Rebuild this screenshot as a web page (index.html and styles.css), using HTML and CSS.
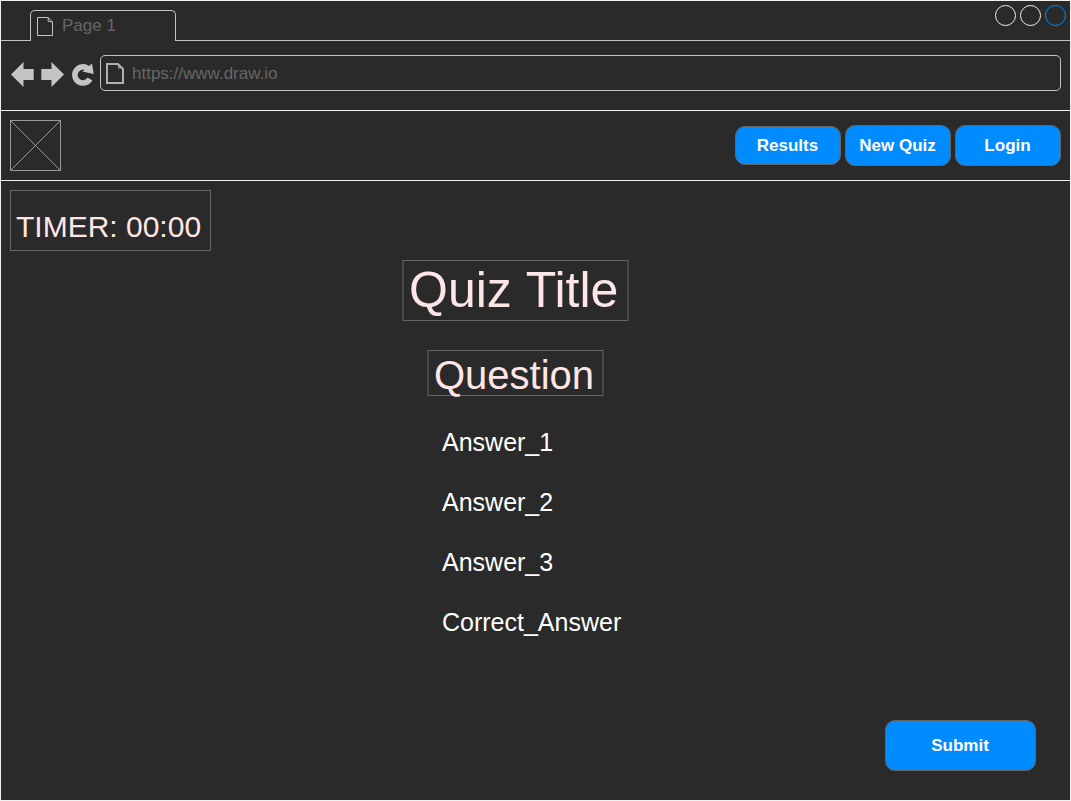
FILE: index.html
```html
<!DOCTYPE html>
<html lang="en">
<head>
<meta charset="utf-8">
<title>Quiz</title>
<link rel="stylesheet" href="styles.css">
</head>
<body>
<div class="window">
  <div class="tab-strip">
    <div class="tab">
      <svg class="tab-icon" width="16" height="19" viewBox="0 0 16 19"><path d="M.5.5H11.2L15.5 5V18.5H.5ZM11.2.5V4.2L15.5 5"/></svg>
      <span>Page 1</span>
    </div>
    <div class="controls">
      <span class="control"></span>
      <span class="control"></span>
      <span class="control control-active"></span>
    </div>
  </div>
  <div class="toolbar">
    <svg class="nav-icons" width="85" height="28" viewBox="10 61 85 28">
      <path class="solid" d="M11 74.5L23.5 62V69H33.7V80H23.5V87Z"/>
      <path class="solid" d="M64 74.5L51.5 62V69H41.3V80H51.5V87Z"/>
      <path class="reload" d="M90 79A8.1 8.1 0 1 1 87.8 68.4"/>
      <path class="solid" d="M92 63.5L93.7 74L82.3 71.6Z"/>
    </svg>
    <div class="address">
      <svg class="page-icon" width="18" height="21" viewBox="0 0 18 21"><path d="M1 1H12L17 6V20H1Z"/><path class="fold" d="M12.5 1V5H17"/></svg>
      <span>https://www.draw.io</span>
    </div>
  </div>
  <header class="site-header">
    <svg class="logo" width="51" height="51" viewBox="0 0 51 51"><path d="M.5.5H50.5V50.5H.5Z"/><path d="M.5.5L50.5 50.5"/><path d="M50.5.5L.5 50.5"/></svg>
    <nav class="actions">
      <button class="button button-short">Results</button>
      <button class="button">New Quiz</button>
      <button class="button">Login</button>
    </nav>
  </header>
  <main class="content">
    <div class="timer">TIMER: 00:00</div>
    <div class="quiz">
      <h1 class="title">Quiz Title</h1>
      <h2 class="question">Question</h2>
      <ul class="answers">
        <li>Answer_1</li>
        <li>Answer_2</li>
        <li>Answer_3</li>
        <li>Correct_Answer</li>
      </ul>
    </div>
    <button class="button submit">Submit</button>
  </main>
</div>
</body>
</html>
```
FILE: styles.css
```css
* { box-sizing: border-box; }
body {
  margin: 0;
  background: #2a2a2a;
  font-family: "Liberation Sans", Arial, sans-serif;
}
.window {
  width: 1071px;
  height: 801px;
  border: 1px solid #f0f0f0;
  background: #2a2a2a;
  display: flex;
  flex-direction: column;
  overflow: hidden;
}
svg { display: block; flex: none; fill: none; }
.tab-strip {
  height: 40px;
  flex: none;
  display: flex;
  justify-content: space-between;
  border-bottom: 1px solid #c4c4c4;
}
.tab {
  width: 146px;
  height: 31px;
  margin: 9px 0 0 29px;
  padding-left: 6px;
  border: 1px solid #c4c4c4;
  border-bottom: 0;
  border-radius: 5px 5px 0 0;
  background: #2a2a2a;
  display: flex;
  gap: 9px;
  color: #666;
  font-size: 17px;
  line-height: 30px;
}
.tab-icon { margin-top: 6px; stroke: #c4c4c4; }
.controls { display: flex; gap: 4px; padding: 4px 4px 0 0; }
.control {
  width: 21px;
  height: 21px;
  border: 1px solid #f0f0f0;
  border-radius: 50%;
}
.control-active { border-color: #008cff; }
.toolbar {
  height: 70px;
  flex: none;
  display: flex;
  padding: 14px 9px 0;
  gap: 5px;
  border-bottom: 1px solid #f0f0f0;
}
.nav-icons { margin-top: 6px; }
.solid { fill: #c4c4c4; }
.reload { stroke: #c4c4c4; stroke-width: 5.6; }
.address {
  flex: 1;
  height: 36px;
  padding-left: 5px;
  border: 1px solid #c4c4c4;
  border-radius: 5px;
  display: flex;
  gap: 8px;
  color: #666;
  font-size: 17px;
  line-height: 35px;
}
.page-icon { margin-top: 7px; stroke: #b0b0b0; stroke-width: 2; }
.fold { stroke-width: 1; }
.site-header {
  height: 70px;
  flex: none;
  display: flex;
  justify-content: space-between;
  padding: 9px 9px 0;
  border-bottom: 1px solid #f0f0f0;
}
.logo { stroke: #999; }
.actions { display: flex; align-items: center; gap: 4px; height: 51px; }
.button {
  width: 106px;
  height: 41px;
  padding: 0 1px 0 0;
  border: 1px solid #666;
  border-radius: 10px;
  background: #008cff;
  color: #fff;
  font: bold 17px "Liberation Sans", Arial, sans-serif;
}
.button-short { height: 39px; }
.content {
  flex: 1;
  display: flex;
  flex-direction: column;
  padding: 9px 34px 0 9px;
}
.timer {
  width: 201px;
  height: 61px;
  padding: 18px 0 0 5px;
  border: 1px solid #666;
  color: #ffe6e6;
  font-size: 30px;
  line-height: 36px;
  white-space: nowrap;
}
.quiz {
  width: 227px;
  margin: 9px 0 0 392px;
  display: flex;
  flex-direction: column;
  align-items: center;
}
.title, .question {
  margin: 0;
  border: solid #484848;
  border-width: 1px 2px;
  border-top-color: #666;
  border-bottom-color: #666;
  color: #ffe6e6;
  font-weight: normal;
  white-space: nowrap;
}
.title { width: 227px; height: 61px; padding-left: 5px; font-size: 50px; line-height: 58px; word-spacing: 1px; }
.question { width: 177px; height: 46px; margin-top: 29px; padding-left: 5px; font-size: 40px; line-height: 48px; }
.answers {
  align-self: flex-start;
  margin: 16px 0 0 40px;
  padding: 0;
  list-style: none;
  color: #fff;
  font-size: 25px;
  line-height: 60px;
}
.submit { width: 151px; height: 51px; margin: auto 0 29px; align-self: flex-end; }
```
